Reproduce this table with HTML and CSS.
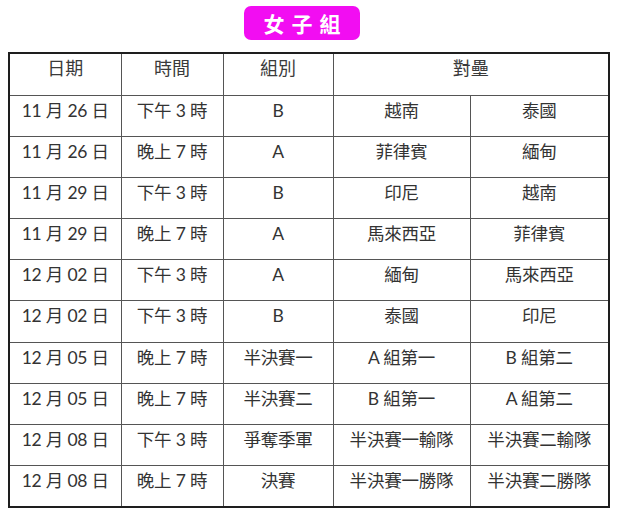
FILE: index.html
```html
<!DOCTYPE html>
<html lang="zh-Hant">
<head>
<meta charset="utf-8">
<title>女子組</title>
<link rel="stylesheet" href="styles.css">
</head>
<body>
<div class="page">
  <header class="title-bar">
    <h1 class="badge">女子組</h1>
  </header>
  <table class="schedule">
    <colgroup>
      <col class="c-date"><col class="c-time"><col class="c-group"><col class="c-team"><col class="c-team2">
    </colgroup>
    <thead>
      <tr><th>日期</th><th>時間</th><th>組別</th><th colspan="2">對壘</th></tr>
    </thead>
    <tbody>
      <tr><td>11 月 26 日</td><td>下午 3 時</td><td>B</td><td>越南</td><td>泰國</td></tr>
      <tr><td>11 月 26 日</td><td>晚上 7 時</td><td>A</td><td>菲律賓</td><td>緬甸</td></tr>
      <tr><td>11 月 29 日</td><td>下午 3 時</td><td>B</td><td>印尼</td><td>越南</td></tr>
      <tr><td>11 月 29 日</td><td>晚上 7 時</td><td>A</td><td>馬來西亞</td><td>菲律賓</td></tr>
      <tr><td>12 月 02 日</td><td>下午 3 時</td><td>A</td><td>緬甸</td><td>馬來西亞</td></tr>
      <tr><td>12 月 02 日</td><td>下午 3 時</td><td>B</td><td>泰國</td><td>印尼</td></tr>
      <tr><td>12 月 05 日</td><td>晚上 7 時</td><td>半決賽一</td><td>A 組第一</td><td>B 組第二</td></tr>
      <tr><td>12 月 05 日</td><td>晚上 7 時</td><td>半決賽二</td><td>B 組第一</td><td>A 組第二</td></tr>
      <tr><td>12 月 08 日</td><td>下午 3 時</td><td>爭奪季軍</td><td>半決賽一輸隊</td><td>半決賽二輸隊</td></tr>
      <tr><td>12 月 08 日</td><td>晚上 7 時</td><td>決賽</td><td>半決賽一勝隊</td><td>半決賽二勝隊</td></tr>
    </tbody>
  </table>
</div>
</body>
</html>
```
FILE: styles.css
```css
html, body {
  margin: 0;
  padding: 0;
  background: #ffffff;
}

.page {
  width: 620px;
  padding-top: 6px;
}

.title-bar {
  display: flex;
  justify-content: center;
  padding-right: 16px;
  margin-bottom: 12px;
}

.badge {
  margin: 0;
  width: 116px;
  height: 34px;
  box-sizing: border-box;
  background: #f20df2;
  border-radius: 7px;
  color: #ffffff;
  font-family: "Noto Sans CJK TC", "Noto Sans CJK SC", sans-serif;
  font-weight: 700;
  font-size: 21px;
  letter-spacing: 7px;
  padding-left: 7px;
  line-height: 34px;
  text-align: center;
}

.schedule {
  margin-left: 8px;
  width: 600px;
  table-layout: fixed;
  border-collapse: collapse;
  border: 2px solid #1e1e1e;
  font-family: "Lato", "Noto Sans CJK TC", sans-serif;
  font-size: 17.5px;
  color: #333333;
}

.c-date { width: 112px; }
.c-time { width: 102px; }
.c-group { width: 110px; }
.c-team { width: 137px; }
.c-team2 { width: 139px; }

.schedule th,
.schedule td {
  border: 1px solid #555555;
  text-align: center;
  vertical-align: top;
  padding: 3px 0 0;
  line-height: 24px;
  white-space: nowrap;
}

.schedule th {
  height: 39px;
  font-weight: 400;
  font-size: 18px;
  color: #3a3a3a;
  padding-top: 2px;
}

.schedule td {
  height: 37.1px;
  letter-spacing: -0.2px;
}
```
